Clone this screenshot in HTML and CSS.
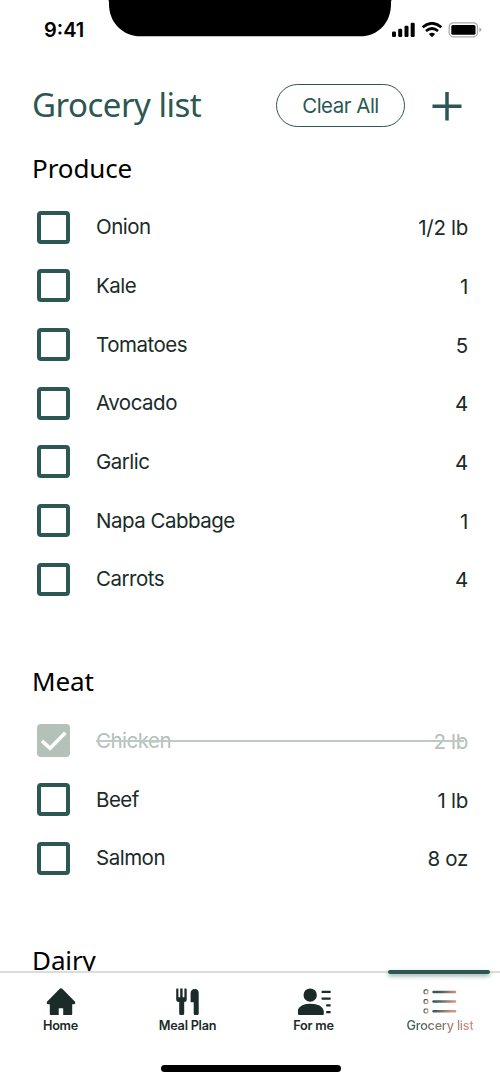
FILE: index.html
```
<!DOCTYPE html>
<html lang="en">
<head>
<meta charset="utf-8">
<title>Grocery list</title>
<link rel="stylesheet" href="styles.css">
</head>
<body>
<div class="screen">
  <header class="status">
    <div class="time">9:41</div>
    <svg class="notch" viewBox="0 0 284 37"><path d="M0 0H284C283 0 283 1 283 4C283 23 270 36.300 252 36.300H33C15 36.300 1 23 1 4C1 1 1 0 0 0Z"/></svg>
    <svg class="signals" viewBox="0 0 90 16">
      <rect x="0" y="9.500" width="4" height="5.500" rx="1.200"/><rect x="6.200" y="6.800" width="4" height="8.200" rx="1.200"/><rect x="12.500" y="3.700" width="4" height="11.300" rx="1.200"/><rect x="18.700" y="0.700" width="4" height="14.300" rx="1.200"/>
      <g fill="none" stroke="#000" stroke-width="2.700"><path d="M30.600 5.300Q40 -2.700 49.400 5.300"/><path d="M34 9Q40 4 46 9"/></g>
      <path d="M36.800 12Q40 9.500 43.200 12L40 15.200Z"/>
      <rect x="57.200" y="0.800" width="28.300" height="14" rx="4" fill="none" stroke="#aaa" stroke-width="1.300"/>
      <rect x="59.300" y="2.900" width="24.200" height="9.900" rx="1.600"/>
      <path d="M87.300 5.500Q89.500 6.200 89.500 7.800T87.300 10Z" fill="#aaa"/>
    </svg>
  </header>
  <div class="titlebar">
    <h1>Grocery list</h1>
    <button class="clear">Clear All</button>
    <svg class="plus" viewBox="0 0 30 30"><path d="M15 1V29.500M0.500 15.300H29.500" stroke="#2c5752" stroke-width="3.500"/></svg>
  </div>
  <main class="lists">
    <section>
      <h2>Produce</h2>
      <ul>
        <li><i class="box"></i><span class="name">Onion</span><span class="qty">1/2 lb</span></li>
        <li><i class="box"></i><span class="name">Kale</span><span class="qty">1</span></li>
        <li><i class="box"></i><span class="name">Tomatoes</span><span class="qty">5</span></li>
        <li><i class="box"></i><span class="name">Avocado</span><span class="qty">4</span></li>
        <li><i class="box"></i><span class="name">Garlic</span><span class="qty">4</span></li>
        <li><i class="box"></i><span class="name">Napa Cabbage</span><span class="qty">1</span></li>
        <li><i class="box"></i><span class="name">Carrots</span><span class="qty">4</span></li>
      </ul>
    </section>
    <section>
      <h2>Meat</h2>
      <ul>
        <li class="done"><i class="box"><svg viewBox="0 0 32 32"><path d="M4.800 16.300L12.700 23.500L27.500 8.500" fill="none" stroke="#fff" stroke-width="3.500"/></svg></i><span class="name">Chicken</span><span class="qty">2 lb</span></li>
        <li><i class="box"></i><span class="name">Beef</span><span class="qty">1 lb</span></li>
        <li><i class="box"></i><span class="name">Salmon</span><span class="qty">8 oz</span></li>
      </ul>
    </section>
    <section>
      <h2>Dairy</h2>
    </section>
  </main>
  <nav class="tabs">
    <div class="tab home">
      <svg viewBox="0 0 30 28"><path d="M15 0.300Q15.800 0.300 16.500 1L28.800 13.500Q29.500 14.300 29.200 15.200Q28.800 16.200 27.800 16.200H26.200V26Q26.200 27 25.200 27H17.200V20.800Q17.200 20.200 16.600 20.200H13.300Q12.700 20.200 12.700 20.800V27H4.800Q3.800 27 3.800 26V16.200H2.200Q1.200 16.200 0.800 15.200Q0.500 14.300 1.200 13.500L13.500 1Q14.200 0.300 15 0.300Z"/></svg>
      <span>Home</span>
    </div>
    <div class="tab meal">
      <svg viewBox="0 0 30 28"><path d="M3.200 1.200Q3.200 0.500 4 0.500H5.400V9.200H7.200V0.500H9.600V9.200H11.400V0.500H12.700Q13.700 0.500 13.700 1.500V11.500Q13.700 14 11.200 14V25.500Q11.200 27 9.700 27H7.800Q6.200 27 6.200 25.500V14Q3.200 14 3.200 11.500ZM18 14.200Q17.600 14.200 17.600 13V5.500Q17.600 1 22 1Q25.700 1 25.700 5.500V25.800Q25.700 27 24.500 27H22Q20.700 27 20.700 25.800V14.200Z"/></svg>
      <span>Meal Plan</span>
    </div>
    <div class="tab me">
      <svg viewBox="0 0 34 28"><circle cx="13.200" cy="7.100" r="6.700"/><path d="M1 26V21.500Q3.500 15.700 13.500 15.700Q25 15.700 26.800 23V26Q26.800 27 25.800 27H2Q1 27 1 26ZM24.600 2.800H33.600V5H24.600ZM24.600 9.600H33.600V11.800H24.600ZM29.200 16.200H33.600V18.400H29.200ZM29.200 23H33.600V25.200H29.200Z"/></svg>
      <span>For me</span>
    </div>
    <div class="tab grocery">
      <svg viewBox="0 0 34 28">
        <defs><linearGradient id="g" gradientUnits="userSpaceOnUse" x1="9" x2="33" y1="0" y2="6"><stop stop-color="#2c5752"/><stop offset=".35" stop-color="#3f5f5a"/><stop offset="1" stop-color="#d49482"/></linearGradient>
        <linearGradient id="d" x2="1" y2=".7"><stop offset=".2" stop-color="#2c5752"/><stop offset="1" stop-color="#d49482"/></linearGradient></defs>
        <g fill="none" stroke="url(#d)" stroke-width="1.100"><rect x="1.100" y="1.900" width="3.800" height="3.900" rx="1"/><rect x="1.100" y="11.600" width="3.800" height="3.900" rx="1"/><rect x="1.100" y="21" width="3.800" height="3.900" rx="1"/></g>
        <g fill="url(#g)"><rect x="9.300" y="2.700" width="24" height="2.500" rx="1.200"/><rect x="9.300" y="12.300" width="24" height="2.500" rx="1.200"/><rect x="9.300" y="21.900" width="24" height="2.500" rx="1.200"/></g>
      </svg>
      <span>Grocery list</span>
    </div>
    <div class="marker"></div>
    <div class="indicator"></div>
  </nav>
</div>
</body>
</html>
```
FILE: styles.css
```
* { box-sizing: border-box; }
body { margin: 0; background: #fff; font-family: Inter, "Liberation Sans", sans-serif; color: #1a2b28; }
h1, h2, ul { margin: 0; padding: 0; font-weight: 400; list-style: none; }
svg { display: block; }
.screen { width: 500px; height: 1083px; display: flex; flex-direction: column; overflow: hidden; }

.status { height: 72px; flex: none; display: flex; align-items: flex-start; }
.time { width: 108px; padding: 18px 0 0 44px; font-size: 20px; line-height: 24px; font-weight: 600; color: #000; white-space: nowrap; }
.notch { width: 284px; height: 37px; }
.signals { width: 90px; height: 16px; margin-top: 22px; }

.titlebar { height: 67.500px; flex: none; display: flex; align-items: center; padding: 0 38px 0 32px; }
h1 { flex: 1; padding-bottom: 2px; font: 400 33px/44px "Noto Sans", sans-serif; letter-spacing: -0.500px; color: #2c5752; white-space: nowrap; }
.clear { width: 129px; height: 43px; padding: 0; border: 1.500px solid #2c5752; border-radius: 22px; background: #fff; color: #2c5752; font: 400 20.500px/24px Inter, sans-serif; letter-spacing: -0.500px; }
.plus { width: 30px; height: 30px; margin-left: 27px; }

.lists { flex: 1; min-height: 0; overflow: hidden; }
section { padding: 0 32px 44.500px; }
h2 { height: 58.400px; font: 400 26px/57px "Noto Sans", sans-serif; letter-spacing: -0.100px; color: #000; }
li { height: 58.700px; display: flex; align-items: center; position: relative; font-size: 20.500px; line-height: 28px; letter-spacing: -0.500px; }
.box { width: 33px; height: 33px; margin: 0 26px 0 5px; border: 4px solid #2c5752; border-radius: 4px; flex: none; }
.name { flex: 1; }
.qty { padding-top: 2px; letter-spacing: -0.300px; }
.done { color: #b3c1b8; }
.done .box { border: 0; background: #b3c1b8; }
.done::after { content: ""; position: absolute; left: 64px; right: 4px; top: 28.500px; height: 2px; background: #bccbc4; }

.tabs { height: 112px; flex: none; position: relative; display: flex; border-top: 2px solid #dcdcdc; background: #fff; padding: 15px 0 0 1px; }
.tab { display: flex; flex-direction: column; flex: none; align-items: center; font-size: 12.700px; line-height: 18px; font-weight: 600; letter-spacing: -0.250px; white-space: nowrap; fill: #1a2b28; }
.tab svg { height: 28px; margin-bottom: 1px; }
.home { width: 119px; }
.meal { width: 135px; }
.me { width: 117px; }
.grocery { width: 128px; padding-left: 8px; font-weight: 500; }
.grocery span { color: transparent; background: linear-gradient(90deg, #2c5752, #d49482); background-clip: text; -webkit-background-clip: text; }
.marker { position: absolute; left: 388px; top: -3px; width: 102px; height: 4px; border-radius: 2px; background: #2c5752; box-shadow: 0 2px 4px #2c575280; }
.indicator { position: absolute; left: 161px; top: 92px; width: 180px; height: 7px; border-radius: 4px; background: #000; }
```
